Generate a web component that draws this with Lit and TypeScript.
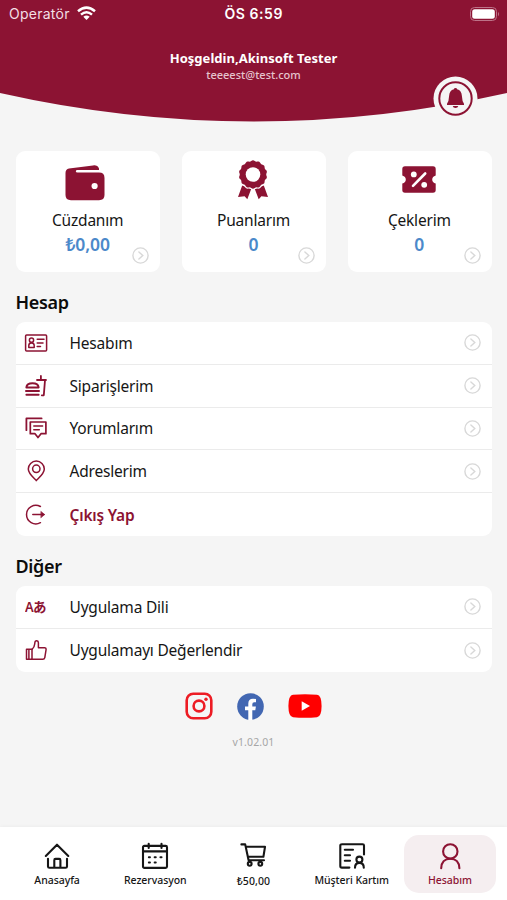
import { LitElement, html, css, svg, nothing } from "lit";
import { customElement } from "lit/decorators.js";
import { classMap } from "lit/directives/class-map.js";

const chevron = html`<svg class="chev" width="17" height="17" viewBox="0 0 17 17" fill="none" stroke="#d8d8d8" stroke-width="1.4">
  <circle cx="8.5" cy="8.5" r="7.6" /><path d="M6.9 4.9 10.8 8.5 6.9 12.1" stroke-linecap="round" />
</svg>`;

const badgePoints = Array.from({ length: 96 }, (_, i) => {
  const a = (i / 96) * Math.PI * 2;
  const r = 13.7 + Math.cos(a * 14) * 0.5;
  return `${(16 + Math.sin(a) * r).toFixed(2)},${(14.5 - Math.cos(a) * r).toFixed(2)}`;
}).join(" ");

const icons = {
  wallet: html`<svg width="40" height="36" viewBox="0 0 40 36">
    <path fill="#8c1333" d="M4 3.4 28 .4Q32.5-.2 34 3.6V5H12.5Q10.8 5 10.8 6.3T12.5 7.6H34Q39.5 7.6 39.5 13V30Q39.5 35.2 34 35.2H6Q.5 35.2 .5 30V8Q.5 4 4 3.4Z" />
    <circle cx="29.6" cy="21" r="3.1" fill="#fff" />
  </svg>`,
  badge: html`<svg width="32" height="40" viewBox="0 0 32 40">
    <g fill="#8c1333">
      <path d="M5.2 25.5 14.2 29 10.3 39.3 7.6 36.2 1 37Z" /><path d="M26.8 25.5 17.8 29 21.7 39.3 24.4 36.2 31 37Z" />
      ${svg`<polygon points=${badgePoints} stroke="#fff" stroke-width="2.4" paint-order="stroke" />`}
    </g>
    <circle cx="16" cy="14.5" r="7.3" fill="#fff" />
  </svg>`,
  ticket: html`<svg width="34" height="27" viewBox="0 0 34 27">
    <path fill="#8c1333" d="M3 .3H31Q33.7 .3 33.7 3V9.4Q30.2 10.4 30.2 13.5T33.7 17.6V24Q33.7 26.7 31 26.7H3Q.3 26.7 .3 24V17.6Q3.8 16.6 3.8 13.5T.3 9.4V3Q.3 .3 3 .3Z" />
    <circle cx="11.8" cy="8.4" r="2.9" fill="#fff" /><circle cx="22.2" cy="18.8" r="2.9" fill="#fff" />
    <path d="M11 19.8 23.2 7.5" stroke="#fff" stroke-width="2.6" stroke-linecap="round" />
  </svg>`,
  card: html`<svg class="ic" viewBox="0 0 24 24"><rect x="1.6" y="3.9" width="21" height="16" rx="1" />
    <circle cx="7.5" cy="9.2" r="2.1" /><path d="M4.8 16.4V14.4Q4.8 12 7.5 12T10.2 14.4V16.4ZM13.2 8.2H20M13.2 12H19M13.2 15.6H16.5" /></svg>`,
  food: html`<svg class="ic" viewBox="0 0 24 24"><path d="M2.4 13.4Q2.8 9.2 8.5 9.2T14.6 13.4ZM2 17H15M2.4 20.8H14.6" stroke-width="2" />
    <path d="M13 6H22M16.9 6V2M21 6.3 19.8 21.3H17.8" stroke-width="1.8" /></svg>`,
  comments: html`<svg class="ic" viewBox="0 0 24 24"><path d="M2.4 14.2V2.4H17.6" stroke-width="1.8" />
    <path d="M6.3 6H21.9V17.7H17L14 21.5 11 17.7H6.3Z" stroke-width="1.7" /><path d="M9.8 9.9H18.6M9.8 13.7H15.3" /></svg>`,
  pin: html`<svg class="ic" viewBox="0 0 24 24"><path d="M12.3 21.6C9.6 18.7 4.3 14.6 4.3 10A8 7.9 0 0 1 20.3 10C20.3 14.6 15 18.7 12.3 21.6Z" /><circle cx="12.3" cy="9.8" r="3.7" /></svg>`,
  exit: html`<svg class="ic" viewBox="0 0 24 24"><path d="M16.4 3.5A9.3 9.3 0 1 0 16.4 19.7M8.8 11.6H20" /><path d="M17.1 8.6 20.6 11.6 17.1 14.6Z" fill="#8c1333" stroke-width=".6" /></svg>`,
  lang: html`<span class="lang"><b>A</b><i>あ</i></span>`,
  thumb: html`<svg class="ic" viewBox="0 0 24 24"><path d="M2.5 11.3H8V21.2H2.5ZM4.9 11.3V21" /><path d="M8 11.3Q10.4 9.5 10.7 6L11 3.8Q11.2 2.6 12.8 2.7 14.4 2.9 14.4 4.8V9.8H20.8Q22.3 10 22.1 11.5L20.8 19.6Q20.4 21.2 18.8 21.2H8" /></svg>`,
  home: html`<svg class="nv" viewBox="0 0 28 28"><path d="M2.8 14 14 2.7 25.3 14M5 16.8V24.4Q5 25.8 6.4 25.8H22.6Q24 25.8 24 24.4V16.8M11.3 25.6V18.2Q11.3 16.9 12.5 16.9H16.2Q17.4 16.9 17.4 18.2V25.6" /></svg>`,
  calendar: html`<svg class="nv" viewBox="0 0 28 28"><rect x="2" y="3.9" width="24" height="22" rx="1.4" /><path d="M2 9.4H26M7.7 1.8V6M20.5 1.8V6" />
    <path d="M7.8 15.2H9M13.6 15.2H14.8M19.4 15.2H20.6M7.8 20.5H9M13.6 20.5H14.8" stroke-width="1.9" /></svg>`,
  cart: html`<svg class="nv" viewBox="0 0 28 28"><path d="M2.4 2.4H6.2L9.6 18.2H25M6.8 4.8H26L24.4 14.8H9" /><circle cx="10.7" cy="21.8" r="1.9" /><circle cx="21.3" cy="21.8" r="1.9" /></svg>`,
  loyalty: html`<svg class="nv" viewBox="0 0 28 28"><path d="M11.4 25.6H3.8Q2.3 25.6 2.3 24V3.6Q2.3 2.2 4 2.2H24.6Q26 2.2 26 3.6V12.4M6.8 7.8H15M6.8 13.3H12M6.8 18.8H12" />
    <circle cx="21.4" cy="17.6" r="3" /><path d="M17 25.8Q17 20.9 21.4 20.9T25.8 25.8" /></svg>`,
  user: html`<svg class="nv" viewBox="0 0 28 28"><circle cx="14.3" cy="9.4" r="7.2" /><path d="M5.2 26.2Q5.6 16.7 14.3 16.7T23.4 26.2" /></svg>`,
};

const stats = [
  { icon: icons.wallet, label: "Cüzdanım", value: "₺0,00", kind: "wallet" },
  { icon: icons.badge, label: "Puanlarım", value: "0", kind: "badge" },
  { icon: icons.ticket, label: "Çeklerim", value: "0", kind: "ticket" },
];

const account = [
  { icon: icons.card, label: "Hesabım" },
  { icon: icons.food, label: "Siparişlerim" },
  { icon: icons.comments, label: "Yorumlarım" },
  { icon: icons.pin, label: "Adreslerim" },
  { icon: icons.exit, label: "Çıkış Yap", exit: true },
];

const other = [
  { icon: icons.lang, label: "Uygulama Dili" },
  { icon: icons.thumb, label: "Uygulamayı Değerlendir" },
];

const tabs = [
  { icon: icons.home, label: "Anasayfa" },
  { icon: icons.calendar, label: "Rezervasyon" },
  { icon: icons.cart, label: "₺50,00", low: true },
  { icon: icons.loyalty, label: "Müşteri Kartım" },
  { icon: icons.user, label: "Hesabım", active: true },
];

@customElement("app-root")
export class AppRoot extends LitElement {
  static styles = css`
    :host { display: flex; flex-direction: column; width: 507px; height: 900px; overflow: hidden; background: #f5f5f5; color: #161616; font-family: "Noto Sans", "Open Sans", sans-serif; }
    * { box-sizing: border-box; }
    svg { display: block; flex: none; }
    .header { position: relative; height: 122px; flex: none; color: #fff; text-align: center; }
    .curve { position: absolute; inset: 0; }
    .status { position: relative; display: grid; grid-template-columns: 1fr auto 1fr; align-items: center; height: 27px; padding: 0 7px 0 9px; font-family: Inter, sans-serif; font-size: 14px; }
    .carrier { display: flex; align-items: center; gap: 7px; color: #f3dfe5; letter-spacing: .25px; }
    .clock { font-weight: 600; letter-spacing: .55px; margin-right: 1.5px; }
    .battery { justify-self: end; }
    .hello { position: relative; margin-top: 21.5px; font-size: 13px; font-weight: 700; line-height: 18px; letter-spacing: .03px; }
    .mail { position: relative; font-size: 11px; line-height: 15px; color: #e6c3cd; font-weight: 500; }
    .bell { position: absolute; left: 433px; top: 76px; }
    .stats { display: grid; grid-template-columns: repeat(3, 1fr); gap: 21.5px; padding: 0 15px 0 16px; margin-top: 28.5px; }
    .stat { position: relative; height: 121.5px; background: #fff; border-radius: 9px; display: flex; flex-direction: column; align-items: center; }
    .pic { height: 58px; display: flex; align-items: center; }
    .pic.wallet { padding-top: 7px; margin-left: -6px; }
    .pic.badge { margin-left: -1px; }
    .pic.ticket { margin-left: -1px; }
    .name { font-size: 15.5px; line-height: 23px; letter-spacing: -.2px; margin-left: -1px; }
    .value { font-size: 17.5px; line-height: 25px; color: #4b89ca; font-weight: 600; letter-spacing: -.1px; margin-left: -1px; }
    .stat .chev { position: absolute; right: 11px; bottom: 8.5px; }
    h2 { margin: 17px 0 0 15.5px; height: 28px; font-size: 18px; line-height: 26px; font-weight: 600; color: #0c0c0c; letter-spacing: -.35px; }
    .list { margin: 5px 15px 0 16px; background: #fff; border-radius: 9px; }
    .row { display: flex; align-items: center; height: 42.8px; padding: 0 11px 0 8px; border-bottom: 1.4px solid #ebebeb; }
    .row:last-child { border: 0; }
    .ic { width: 24px; height: 24px; fill: none; stroke: #8c1333; stroke-width: 1.5; stroke-linecap: round; stroke-linejoin: round; }
    .lang { width: 24px; display: flex; align-items: baseline; color: #8c1333; padding-left: 1px; line-height: 20px; white-space: nowrap; }
    .lang b { font-size: 14px; font-weight: 600; transform: scaleX(.92); transform-origin: left; margin-right: -1px; }
    .lang i { font: 700 13.5px/20px "Noto Sans CJK JP", sans-serif; margin-left: -.5px; }
    .text { flex: 1; margin-left: 21.5px; font-size: 15.5px; line-height: 24px; letter-spacing: -.2px; }
    .exit { font-weight: 600; color: #8c1333; }
    .social { display: flex; align-items: center; justify-content: center; gap: 24px; margin-top: 20px; height: 29px; }
    .version { margin-top: 13px; text-align: center; color: #a6a6a6; font-size: 10.5px; line-height: 16px; letter-spacing: .12px; }
    .tabs { display: grid; grid-template-columns: repeat(5, 1fr); margin-top: auto; height: 73.5px; flex: none; padding: 8px 8px 7px; background: #fff; box-shadow: 0 -1px 3px #00000008; }
    .tab { display: flex; flex-direction: column; align-items: center; margin: 0 3.3px; padding-top: 7px; border-radius: 15px; font-size: 10.5px; line-height: 16px; white-space: nowrap; font-weight: 500; }
    .tab.active { color: #8c1333; background: #f5eef0; }
    .tab span { margin-top: 2px; letter-spacing: -.05px; }
    .tab.low span { margin-top: 3px; letter-spacing: .1px; }
    .nv { width: 28px; height: 28px; fill: none; stroke: currentColor; stroke-width: 2.1; stroke-linecap: round; stroke-linejoin: round; }
  `;

  private list(items: { icon: unknown; label: string; exit?: boolean }[]) {
    return html`<div class="list">${items.map(
      (r) => html`<div class="row">${r.icon}<span class=${classMap({ text: true, exit: !!r.exit })}>${r.label}</span>${r.exit ? nothing : chevron}</div>`
    )}</div>`;
  }

  render() {
    return html`
      <header class="header">
        <svg class="curve" width="507" height="122" viewBox="0 0 507 122"><path d="M0 0H507V93Q253.5 150 0 93Z" fill="#8c1333" /></svg>
        <div class="status">
          <div class="carrier">Operatör
            <svg width="19" height="15" viewBox="0 0 19 15" fill="none" stroke="#fff" stroke-width="2.5"><path d="M1 5.2Q9.5-2 18 5.2M4 8.6Q9.5 3.8 15 8.6" /><path d="M6.3 10.8Q9.5 8 12.7 10.8L9.5 14Z" fill="#fff" stroke="none" /></svg>
          </div>
          <div class="clock">ÖS 6:59</div>
          <svg class="battery" width="30" height="14" viewBox="0 0 30 14"><rect x=".5" y=".5" width="26" height="13" rx="4" fill="none" stroke="#bd7388" /><rect x="2.2" y="2.2" width="22.6" height="9.6" rx="2.5" fill="#fff" /><path d="M28 4.7Q30 7 28 9.3Z" fill="#bd7388" /></svg>
        </div>
        <div class="hello">Hoşgeldin,Akinsoft Tester</div>
        <div class="mail">teeeest@test.com</div>
        <svg class="bell" width="45" height="45" viewBox="0 0 45 45"><circle cx="22.5" cy="22.5" r="22" fill="#f5f5f5" /><circle cx="22.5" cy="22.5" r="16.2" fill="none" stroke="#8c1333" stroke-width="2" />
          <path fill="#8c1333" d="M22.5 12Q24 12 24.1 13.2 28.6 14.3 28.9 20 29.1 25.3 31 27.8V29H14V27.8Q15.9 25.3 16.1 20 16.4 14.3 20.9 13.2 21 12 22.5 12ZM19.7 29.9H25.3Q24.8 32 22.5 32T19.7 29.9Z" /></svg>
      </header>
      <section class="stats">${stats.map(
        (s) => html`<div class="stat"><div class=${classMap({ pic: true, [s.kind]: true })}>${s.icon}</div><div class="name">${s.label}</div><div class="value">${s.value}</div>${chevron}</div>`
      )}</section>
      <h2>Hesap</h2>
      ${this.list(account)}
      <h2>Diğer</h2>
      ${this.list(other)}
      <div class="social">
        <svg width="28" height="28" viewBox="0 0 28 28" fill="none" stroke="#ed1c24" stroke-width="2.6"><rect x="1.7" y="1.7" width="24.6" height="24.6" rx="6.5" /><circle cx="14" cy="14" r="5.4" /><circle cx="21" cy="7.2" r="1.7" fill="#ed1c24" stroke="none" /></svg>
        <svg width="27" height="27" viewBox="0 0 27 27"><circle cx="13.5" cy="13.5" r="13.3" fill="#4267b2" /><path fill="#fff" d="M11.3 27V17.3H8V13.4H11.3V10.5Q11.3 5.7 16 5.7 17.7 5.7 19 6V9.2H17.2Q15.3 9.2 15.3 11.3V13.4H18.9L18.3 17.3H15.3V27Z" /></svg>
        <svg width="34" height="24" viewBox="0 0 34 24"><path fill="#f00" d="M5 .8Q17-.3 29 .8 33.5 1.2 33.6 12 33.5 22.8 29 23.2 17 24.2 5 23.2 .5 22.8 .4 12 .5 1.2 5 .8Z" /><path d="M13.7 7.2V16.8L22 12Z" fill="#fff" /></svg>
      </div>
      <div class="version">v1.02.01</div>
      <nav class="tabs">${tabs.map(
        (t) => html`<div class=${classMap({ tab: true, active: !!t.active, low: !!t.low })}>${t.icon}<span>${t.label}</span></div>`
      )}</nav>
    `;
  }
}
